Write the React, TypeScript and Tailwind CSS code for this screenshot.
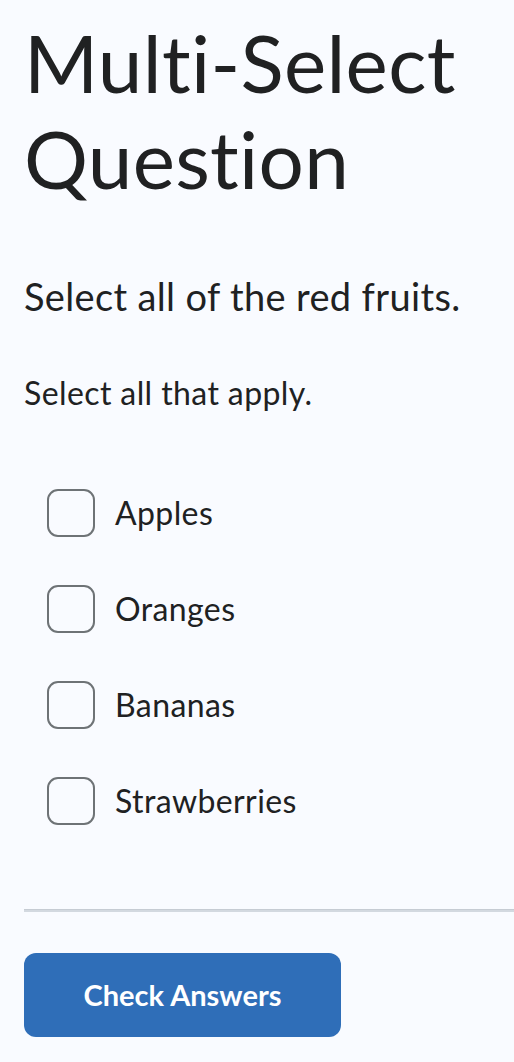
import React from "react";

const options = ["Apples", "Oranges", "Bananas", "Strawberries"];

export default function App() {
  return (
    <div
      className="min-h-[1062px] w-full bg-[#f9fbff] text-[#202122] pl-6"
      style={{ fontFamily: "Lato, 'Open Sans', sans-serif" }}
    >
      <h1 className="pt-[14px] text-[80px] leading-[96px] font-normal tracking-[0.3px]">
        Multi-Select Question
      </h1>
      <p className="mt-[62px] text-[38px] leading-[57px] tracking-[0.35px]">Select all of the red fruits.</p>
      <p className="mt-[44px] text-[32px] leading-[48px] tracking-[0.4px]">Select all that apply.</p>
      <div className="mt-[72px] flex flex-col gap-[48px]">
        {options.map((o) => (
          <label key={o} className="flex items-center gap-[20px] pl-[23px]">
            <span className="block h-[48px] w-[48px] rounded-[11px] border-2 border-[#6e7376] bg-[#f9fbff]" />
            <span className="text-[32px] leading-[48px] tracking-[0.4px]">{o}</span>
          </label>
        ))}
      </div>
      <div className="mt-[84px] h-[3px] bg-[#d3d9e0] border-t border-[#c6ccd3]" />
      <button className="mt-[41px] h-[84px] w-[317px] rounded-[12px] bg-[#2f6eb8] text-white text-[29px] font-bold">
        Check Answers
      </button>
    </div>
  );
}
